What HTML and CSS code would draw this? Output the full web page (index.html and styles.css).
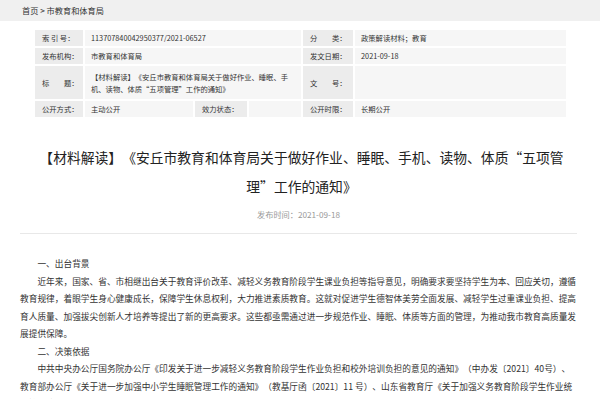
FILE: index.html
```html
<!DOCTYPE html>
<html lang="zh-CN">
<head>
  <meta charset="UTF-8" />
  <meta name="viewport" content="width=device-width, initial-scale=1.0"/>
  <title>【材料解读】《安丘市教育和体育局关于做好作业、睡眠、手机、读物、体质“五项管理”工作的通知》</title>
  <link rel="stylesheet" href="styles.css">
</head>
<body>
  <div class="crumb">
    <a href="#">首页</a> &gt; <a href="#">市教育和体育局</a>
  </div>

  <div class="main">
    <table class="meta">
      <colgroup>
        <col class="c-lbl1">
        <col class="c-val1">
        <col class="c-lbl2">
        <col class="c-val2">
        <col class="c-lbl3">
        <col class="c-val3">
      </colgroup>
      <tr>
        <td class="lbl">索 引 号：</td>
        <td class="val" colspan="3">113707840042950377/2021-06527</td>
        <td class="lbl">分　　类：</td>
        <td class="val">政策解读材料；教育</td>
      </tr>
      <tr>
        <td class="lbl">发布机构：</td>
        <td class="val" colspan="3">市教育和体育局</td>
        <td class="lbl">发文日期：</td>
        <td class="val">2021-09-18</td>
      </tr>
      <tr class="tall">
        <td class="lbl">标　　题：</td>
        <td class="val" colspan="3">【材料解读】《安丘市教育和体育局关于做好作业、睡眠、手机、读物、体质“五项管理”工作的通知》</td>
        <td class="lbl">文　　号：</td>
        <td class="val"></td>
      </tr>
      <tr>
        <td class="lbl">公开方式：</td>
        <td class="val">主动公开</td>
        <td class="lbl">效力状态：</td>
        <td class="val"></td>
        <td class="lbl">公开时限：</td>
        <td class="val">长期公开</td>
      </tr>
    </table>

    <h1 class="title">【材料解读】《安丘市教育和体育局关于做好作业、睡眠、手机、读物、体质“五项管理”工作的通知》</h1>
    <div class="pubdate">发布时间：2021-09-18</div>

    <div class="content">
      <p>一、出台背景</p>
      <p>近年来，国家、省、市相继出台关于教育评价改革、减轻义务教育阶段学生课业负担等指导意见，明确要求要坚持学生为本、回应关切，遵循教育规律，着眼学生身心健康成长，保障学生休息权利，大力推进素质教育。这就对促进学生德智体美劳全面发展、减轻学生过重课业负担、提高育人质量、加强拔尖创新人才培养等提出了新的更高要求。这些都亟需通过进一步规范作业、睡眠、体质等方面的管理，为推动我市教育高质量发展提供保障。</p>
      <p>二、决策依据</p>
      <p>中共中央办公厅国务院办公厅《印发关于进一步减轻义务教育阶段学生作业负担和校外培训负担的意见的通知》（中办发〔2021〕40号）、教育部办公厅《关于进一步加强中小学生睡眠管理工作的通知》（教基厅函〔2021〕11 号）、山东省教育厅《关于加强义务教育阶段学生作业统筹管理的通知》等文件。</p>
    </div>
  </div>
</body>
</html>
```

FILE: styles.css
```css
body {
  margin: 0;
  background-color: #fff;
  font-family: "Noto Sans CJK SC", "Noto Sans", sans-serif;
  color: #333;
  overflow: hidden;
  text-spacing-trim: space-all;
}

a {
  color: #333;
  text-decoration: none;
}

.crumb {
  height: 21px;
  line-height: 21px;
  padding-left: 22px;
  background-color: #f0f0f0;
  font-size: 8.2px;
}

.main {
  width: 557px;
  margin-left: 20px;
}

/* info table */
.meta {
  table-layout: fixed;
  width: 535px;
  margin: 7px 0 0 13px;
  border-spacing: 2px;
  font-size: 7.3px;
}

.c-lbl1 { width: 48px; }
.c-val1 { width: 108px; }
.c-lbl2 { width: 52px; }
.c-val2 { width: 52px; }
.c-lbl3 { width: 50px; }
.c-val3 { width: 211px; }

.meta td {
  height: 16px;
  padding: 0 3px 0 6px;
  line-height: 12px;
  vertical-align: middle;
}

.meta tr.tall td {
  height: 31px;
  padding-top: 1px;
  padding-bottom: 1px;
}

.meta .lbl {
  background-color: #ececec;
  padding-left: 7px;
  white-space: nowrap;
}

.meta .val {
  background-color: #f6f6f6;
}

.title {
  margin: 24px 2px 0 8px;
  font-size: 13.8px;
  font-weight: normal;
  line-height: 29px;
  text-align: center;
  color: #222;
}

.pubdate {
  margin-top: 6px;
  font-size: 8.2px;
  line-height: 14px;
  text-align: center;
  color: #999;
}

.content {
  margin-top: 12px;
  padding-top: 21px;
  border-top: 1px solid #e8e8e8;
  font-size: 8.7px;
  line-height: 17.5px;
}

.content p {
  margin: 0;
  text-indent: 2em;
}
```
